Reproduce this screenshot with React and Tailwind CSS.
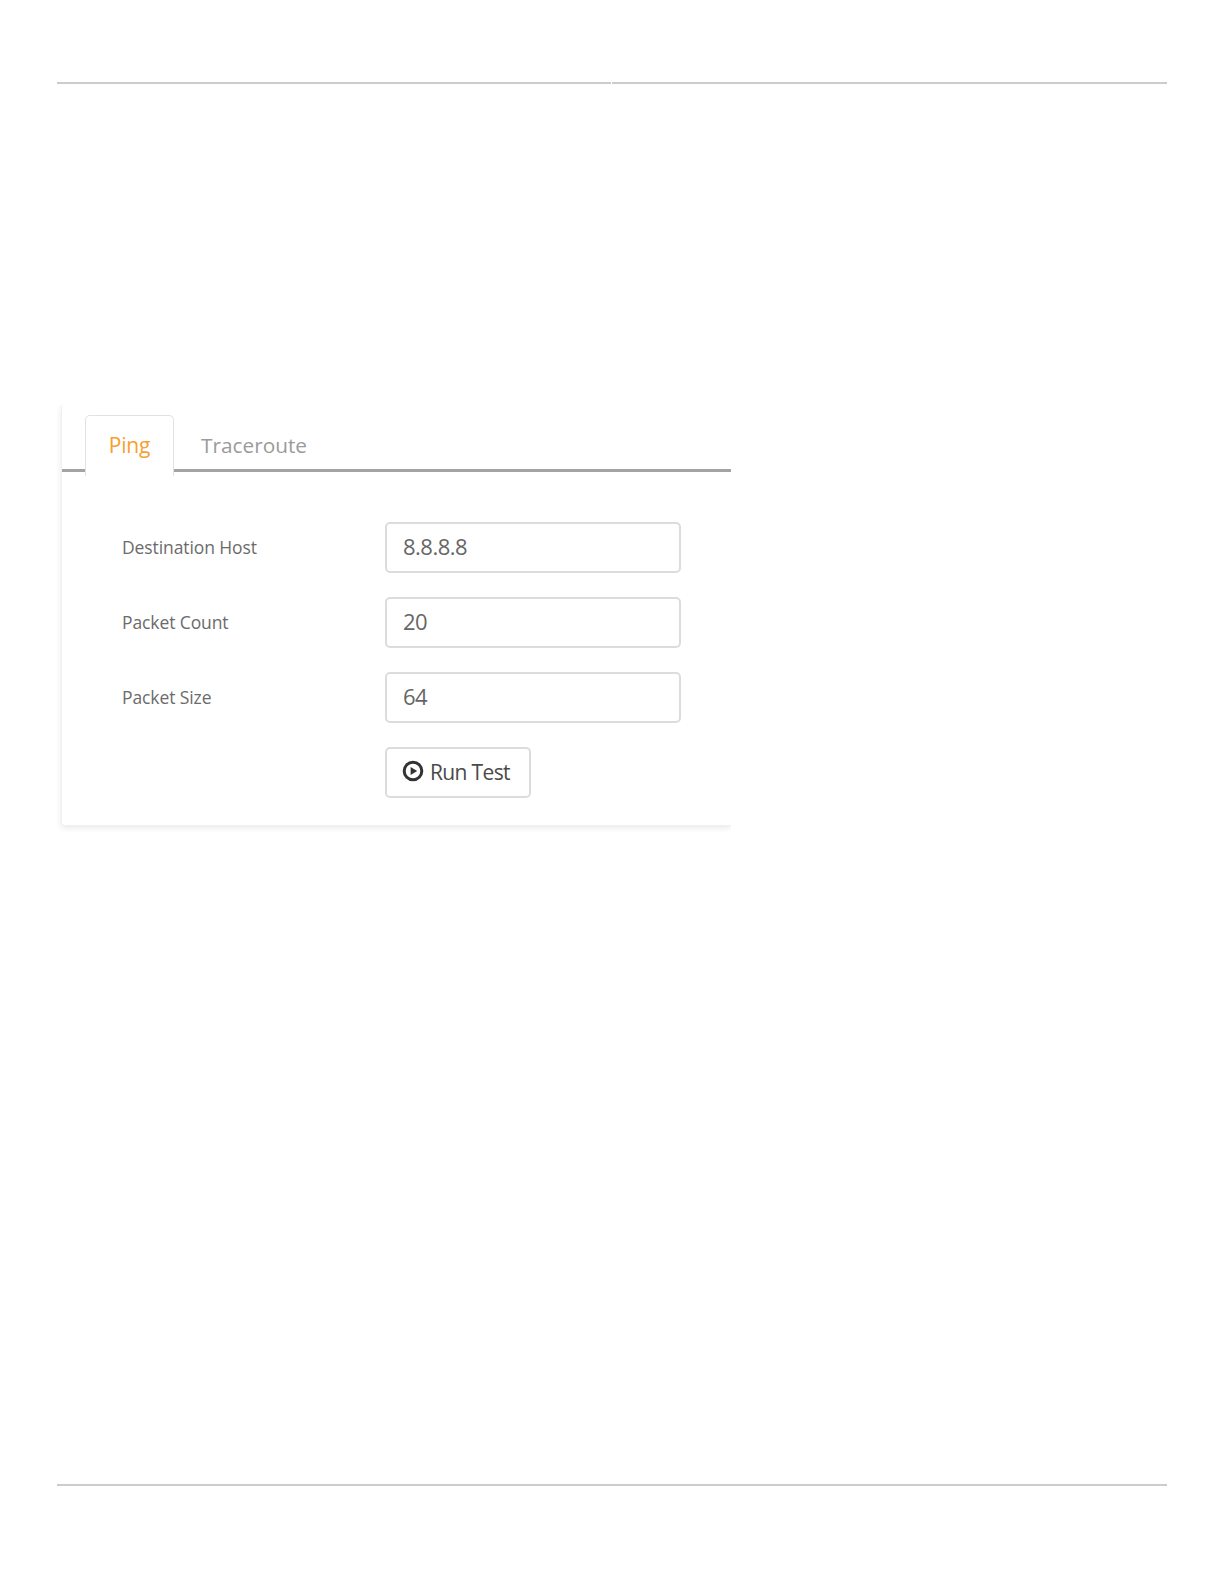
const rows = [
  { label: "Destination Host", value: "8.8.8.8" },
  { label: "Packet Count", value: "20" },
  { label: "Packet Size", value: "64" },
];

const PlayIcon = () => (
  <svg width="22" height="22" viewBox="0 0 22 22" className="shrink-0 -mt-[3px]">
    <circle cx="11" cy="11" r="8.8" fill="none" stroke="#333" strokeWidth="3" />
    <path d="M8.6 6.9 L15.2 11 L8.6 15.1 Z" fill="#333" />
  </svg>
);

const App = () => {
  return (
    <div className="w-[1224px] h-[1584px] bg-white overflow-hidden font-['Open_Sans',sans-serif]">
      <div className="pt-[82px] pl-[57px] flex">
        <div className="w-[554px] h-[2px] bg-[#cccccc]"></div>
        <div className="w-[555px] h-[2px] ml-px bg-[#cccccc]"></div>
      </div>

      <div className="mt-[321px] ml-[54px] w-[677px] h-[431px] overflow-hidden pl-[7px]">
        <div className="h-[421px] bg-white rounded-bl-[4px] border-l border-b border-[#f0f0f0] shadow-[0_2px_6px_rgba(0,0,0,0.09)]">
          <div className="relative h-[67px] pt-[10px] pl-[23px] flex border-b-[3px] border-[#a3a3a3]">
            <div className="relative z-10 w-[89px] h-[61px] bg-white border border-b-0 border-[#e2e2e2] rounded-t-[5px] text-center text-[21px] tracking-[-0.2px] leading-[58px] text-[#f7a030]">
              Ping
            </div>
            <div className="ml-[27px] h-[50px] text-[20.8px] leading-[60px] text-[#9b9b9b]">Traceroute</div>
          </div>

          <div className="pt-[50px] pl-[60px]">
            {rows.map((row) => (
              <div key={row.label} className="flex items-center h-[51px] mb-[24px]">
                <div className="w-[263px] text-[17.5px] tracking-[-0.1px] text-[#6b6b6b]">{row.label}</div>
                <div className="w-[296px] h-[51px] pl-[16px] bg-white border-2 border-[#dcdcdc] rounded-[5px] text-[22px] tracking-[-0.5px] leading-[45px] text-[#666666]">
                  {row.value}
                </div>
              </div>
            ))}
            <div className="pl-[263px]">
              <button className="w-[146px] h-[51px] pl-[15px] bg-white border-2 border-[#dcdcdc] rounded-[5px] flex items-center gap-[6px] text-[21px] tracking-[-0.65px] text-[#4a4a4a]">
                <PlayIcon />
                Run Test
              </button>
            </div>
          </div>
        </div>
      </div>

      <div className="mt-[648px] ml-[57px] w-[1110px] h-[2px] bg-[#cccccc]"></div>
    </div>
  );
};

export default App;
